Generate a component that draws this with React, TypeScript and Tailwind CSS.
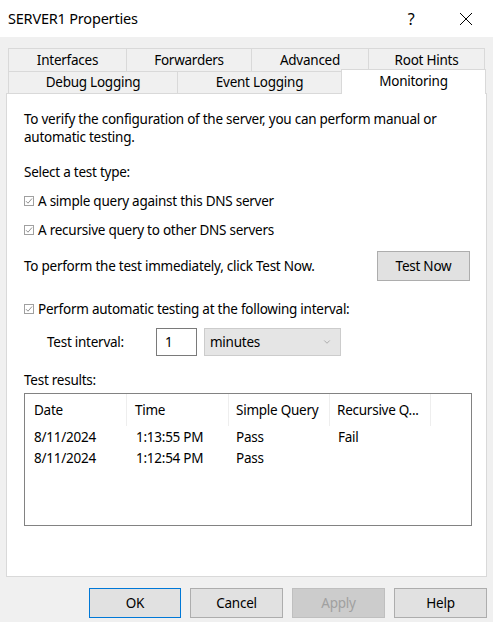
import { ChevronDown } from 'lucide-react'

const rowOne = [
  { label: 'Interfaces', w: 'w-[118px]' },
  { label: 'Forwarders', w: 'w-[125px]' },
  { label: 'Advanced', w: 'w-[117px]' },
  { label: 'Root Hints', w: 'w-[117px]' },
]

const results = [
  { date: '8/11/2024', time: '1:13:55 PM', simple: 'Pass', recursive: 'Fail' },
  { date: '8/11/2024', time: '1:12:54 PM', simple: 'Pass', recursive: '' },
]

function Check({ label }: { label: string }) {
  return (
    <div className="flex items-center h-[18px]">
      <span className="w-[10px] h-[10px] border border-[#a0a0a0] flex items-center justify-center mr-[4px] bg-white">
        <svg width="8" height="8" viewBox="0 0 8 8">
          <path d="M1 4.2 L3 6.2 L7 1.5" fill="none" stroke="#909090" strokeWidth="1" />
        </svg>
      </span>
      <span>{label}</span>
    </div>
  )
}

export default function App() {
  return (
    <div className="w-[493px] h-[622px] bg-[#f0f0f0] text-[13.5px] tracking-[-0.25px] text-black overflow-hidden" style={{ fontFamily: '"Segoe UI", "Noto Sans", sans-serif' }}>
      <div className="h-[37px] bg-white flex items-center pl-[8px]">
        <span className="text-[14.5px] tracking-[-0.2px] flex-1">SERVER1 Properties</span>
        <span className="text-[16px] w-[20px] text-center mr-[38px]">?</span>
        <svg width="14" height="14" viewBox="0 0 14 14" className="mr-[20px]">
          <path d="M1 1 L13 13 M13 1 L1 13" stroke="#000" strokeWidth="1" />
        </svg>
      </div>

      <div className="pt-[11px]">
        <div className="flex ml-[8px] h-[23px]">
          {rowOne.map((t) => (
            <div key={t.label} className={`${t.w} border-t border-l border-[#d9d9d9] last:border-r flex items-center justify-center`}>
              {t.label}
            </div>
          ))}
        </div>
        <div className="flex ml-[8px] h-[22px] items-end">
          <div className="w-[169px] h-[22px] border-t border-l border-[#d9d9d9] flex items-center justify-center">Debug Logging</div>
          <div className="w-[164px] h-[22px] border-t border-l border-[#d9d9d9] flex items-center justify-center">Event Logging</div>
          <div className="w-[145px] h-[25px] bg-white border-t border-l border-r border-[#d9d9d9] flex items-start justify-center pt-[1px] relative z-10 -mb-px">
            Monitoring
          </div>
        </div>

        <div className="mx-[6px] h-[484px] bg-white border border-[#d9d9d9] pl-[17px] pr-[16px] leading-[18px]">
          <p className="mt-[16px]">To verify the configuration of the server, you can perform manual or<br />automatic testing.</p>
          <p className="mt-[17px]">Select a test type:</p>
          <div className="mt-[11px]">
            <Check label="A simple query against this DNS server" />
          </div>
          <div className="mt-[11px]">
            <Check label="A recursive query to other DNS servers" />
          </div>
          <div className="mt-[12px] flex items-center justify-between">
            <span>To perform the test immediately, click Test Now.</span>
            <button className="w-[93px] h-[30px] bg-[#e1e1e1] border border-[#adadad]">Test Now</button>
          </div>
          <div className="mt-[19px]">
            <Check label="Perform automatic testing at the following interval:" />
          </div>
          <div className="mt-[10px] flex items-center h-[28px]">
            <span className="ml-[23px] w-[109px]">Test interval:</span>
            <div className="w-[41px] h-[28px] border border-[#7a7a7a] flex items-center pl-[8px]">1</div>
            <div className="ml-[7px] w-[137px] h-[28px] bg-[#e5e5e5] border border-[#cccccc] flex items-center justify-between pl-[5px] pr-[8px]">
              <span>minutes</span>
              <ChevronDown className="w-[10px] h-[10px] text-[#8a8a8a]" strokeWidth={1.5} />
            </div>
          </div>
          <p className="mt-[15px]">Test results:</p>
          <div className="mt-[4px] w-[448px] h-[133px] border border-[#828282]">
            <div className="flex h-[32px] items-center">
              <div className="w-[102px] pl-[9px] border-r border-[#eeeeee] h-full flex items-center">Date</div>
              <div className="w-[102px] pl-[8px] border-r border-[#eeeeee] h-full flex items-center">Time</div>
              <div className="w-[101px] pl-[7px] border-r border-[#eeeeee] h-full flex items-center">Simple Query</div>
              <div className="w-[101px] pl-[7px] border-r border-[#eeeeee] h-full flex items-center">Recursive Q...</div>
            </div>
            {results.map((r, i) => (
              <div key={i} className="flex h-[21px] items-center">
                <div className="w-[102px] pl-[9px]">{r.date}</div>
                <div className="w-[102px] pl-[9px]">{r.time}</div>
                <div className="w-[101px] pl-[7px]">{r.simple}</div>
                <div className="w-[101px] pl-[8px]">{r.recursive}</div>
              </div>
            ))}
          </div>
        </div>

        <div className="flex justify-end gap-[9px] mt-[11px] mr-[6px]">
          <button className="w-[92px] h-[30px] bg-[#e1e1e1] border border-[#0078d7]">OK</button>
          <button className="w-[93px] h-[30px] bg-[#e1e1e1] border border-[#adadad]">Cancel</button>
          <button className="w-[93px] h-[30px] bg-[#cccccc] border border-[#bfbfbf] text-[#a0a0a0]">Apply</button>
          <button className="w-[93px] h-[30px] bg-[#e1e1e1] border border-[#adadad]">Help</button>
        </div>
      </div>
    </div>
  )
}
